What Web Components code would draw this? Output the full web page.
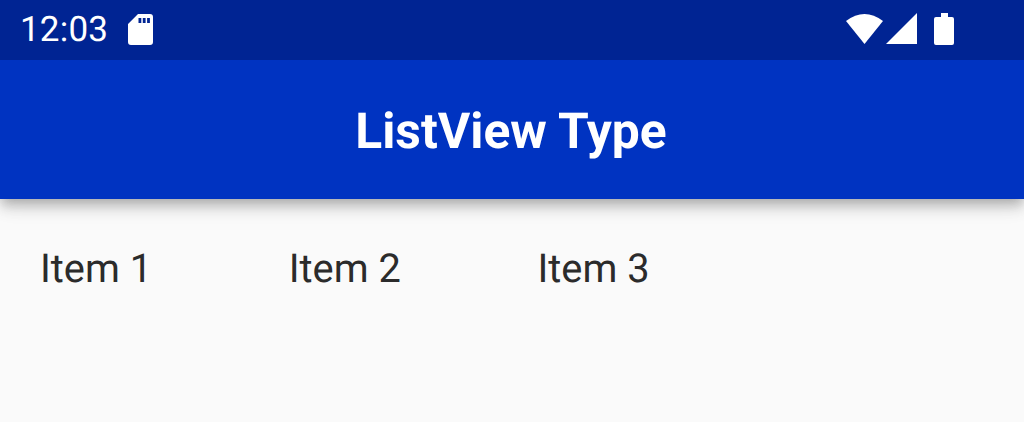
<!DOCTYPE html>
<html>
<head>
<meta charset="utf-8">
<style>
  html, body { margin: 0; height: 100%; overflow: hidden; background: #fafafa; font-family: Roboto, sans-serif; text-rendering: geometricPrecision; }
</style>
</head>
<body>
<app-screen>
  <status-bar slot="status" time="12:03"></status-bar>
  <app-bar slot="bar">ListView Type</app-bar>
  <list-row>
    <list-item>Item 1</list-item>
    <list-item>Item 2</list-item>
    <list-item>Item 3</list-item>
  </list-row>
</app-screen>
<script>
class AppScreen extends HTMLElement {
  constructor() {
    super();
    this.attachShadow({ mode: 'open' });
    this.shadowRoot.innerHTML = `
      <style>
        :host { display: flex; flex-direction: column; height: 422px; background: #fafafa; }
        header {
          position: relative;
          z-index: 1;
          box-shadow: 0 5px 10px -2.5px rgba(0,0,0,0.18), 0 10px 12.5px 0 rgba(0,0,0,0.12), 0 2.5px 25px 0 rgba(0,0,0,0.1);
        }
      </style>
      <header>
        <slot name="status"></slot>
        <slot name="bar"></slot>
      </header>
      <slot></slot>
    `;
  }
}

class StatusBar extends HTMLElement {
  constructor() {
    super();
    this.attachShadow({ mode: 'open' });
    this.shadowRoot.innerHTML = `
      <style>
        :host { display: flex; align-items: center; height: 60px; padding: 0 70px 0 20px; background: #002493; color: #fff; }
        #time { font-size: 35px; line-height: 62px; letter-spacing: 0.2px; }
        svg { display: block; fill: #fff; }
        #sd { margin-left: 20px; margin-bottom: 1px; }
        #right { margin-left: auto; display: flex; align-items: center; padding-bottom: 2px; }
      </style>
      <span id="time">${this.getAttribute('time')}</span>
      <svg id="sd" width="25" height="31" viewBox="0 0 25 31">
        <path fill-rule="evenodd" d="M10 0H22Q25 0 25 3V28Q25 31 22 31H3Q0 31 0 28V10ZM10.500 4V9H13.300V4ZM14.800 4V9H17.600V4ZM19.100 4V9H21.900V4Z"/>
      </svg>
      <div id="right">
        <svg width="37" height="32" viewBox="0 0 37 32" style="margin-right:3px"><path d="M0 8Q18.500 -6 37 8L18.500 31Z"/></svg>
        <svg width="31" height="32" viewBox="0 0 31 32" style="margin-right:17px"><path d="M31 0V31H0Z"/></svg>
        <svg width="20" height="32" viewBox="0 0 20 32"><path d="M7 0H14V4H18Q20 4 20 6V30Q20 32 18 32H2Q0 32 0 30V6Q0 4 2 4H7Z"/></svg>
      </div>
    `;
  }
}

class AppBar extends HTMLElement {
  constructor() {
    super();
    this.attachShadow({ mode: 'open' });
    this.shadowRoot.innerHTML = `
      <style>
        :host { display: flex; align-items: center; justify-content: center; box-sizing: border-box; height: 139px; padding: 4px 2px 0 0; background: #0033c1; color: #fff; font-size: 49.75px; font-weight: 700; }
      </style>
      <slot></slot>
    `;
  }
}

class ListRow extends HTMLElement {
  constructor() {
    super();
    this.attachShadow({ mode: 'open' });
    this.shadowRoot.innerHTML = `
      <style>
        :host { display: flex; padding: 40px 0 0 40px; }
      </style>
      <slot></slot>
    `;
  }
}

class ListItem extends HTMLElement {
  constructor() {
    super();
    this.attachShadow({ mode: 'open' });
    this.shadowRoot.innerHTML = `
      <style>
        :host { display: block; width: 248.75px; font-size: 39.8px; line-height: 60px; color: #2b2b2b; }
      </style>
      <slot></slot>
    `;
  }
}

customElements.define('app-screen', AppScreen);
customElements.define('status-bar', StatusBar);
customElements.define('app-bar', AppBar);
customElements.define('list-row', ListRow);
customElements.define('list-item', ListItem);
</script>
</body>
</html>
